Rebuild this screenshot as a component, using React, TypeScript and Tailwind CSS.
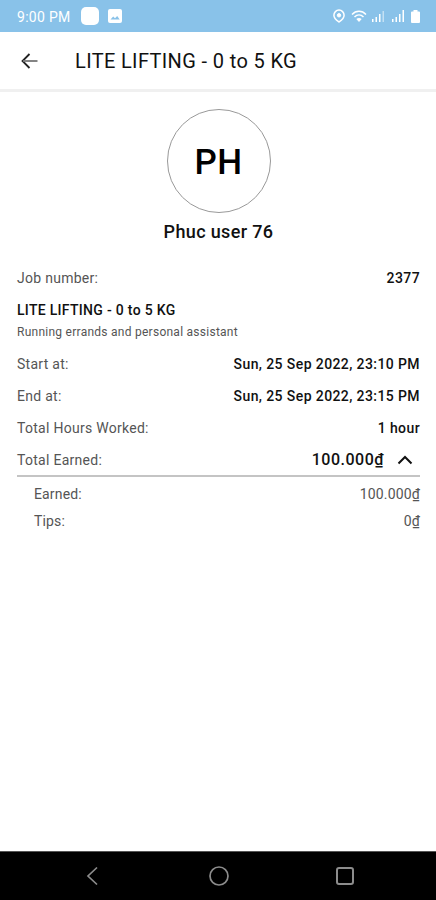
import React from 'react';

interface DetailRowProps {
  label: string;
  value: string;
}

const DetailRow: React.FC<DetailRowProps> = ({ label, value }) => (
  <div className="flex h-8 items-center justify-between">
    <span className="text-sm tracking-[0.28px] text-[#555]">{label}</span>
    <span className="text-sm font-medium tracking-[0.4px] text-[#111]">{value}</span>
  </div>
);

const StatusBar = () => (
  <div className="flex h-8 items-center bg-[#89c2e9] pl-[17px] pr-[16px] text-white">
    <span className="w-[54px] whitespace-nowrap pt-px text-sm tracking-[0.3px]">9:00 PM</span>
    <div className="ml-[10px] h-[18px] w-[18px] rounded-[5px] bg-white"></div>
    <svg className="ml-[9px]" width="14" height="14" viewBox="0 0 14 14">
      <rect width="14" height="14" rx="2" fill="white" />
      <path d="M2.5 10.5l2.7-3 1.8 1.8 2.2-2.2 2.5 3.4z" fill="#89c2e9" />
    </svg>
    <div className="ml-auto flex items-center">
      <svg width="12" height="14" viewBox="0 0 12 14" fill="none" stroke="white">
        <path d="M6 13C4 11.600.9 9.500.9 6.200a5.100 5.100 0 0 1 10.200 0C11.100 9.500 8 11.600 6 13z" strokeWidth="1.500" />
        <circle cx="6" cy="6.300" r="1.700" fill="white" />
      </svg>
      <svg className="ml-[6px]" width="16" height="13" viewBox="0 0 16 13" fill="none" stroke="white" strokeWidth="1.500">
        <path d="M1 4.500C5 .3 11 .3 15 4.500M3.500 7c2.700-2.600 6.300-2.600 9 0" />
        <path d="M8 12L5.300 9c1.600-1.500 3.800-1.500 5.400 0z" fill="white" stroke="none" />
      </svg>
      <svg className="ml-[4px]" width="14" height="12" viewBox="0 0 14 12" fill="white">
        <path d="M1 9h1.500v3H1zM4.500 7H6v5H4.500zM8 4h1.500v8H8z" />
        <path d="M11.500 1H13v11h-1.500z" opacity=".5" />
      </svg>
      <svg className="ml-[6px]" width="14" height="12" viewBox="0 0 14 12" fill="white">
        <path d="M1 9h1.500v3H1zM4.500 7H6v5H4.500zM8 4h1.500v8H8zM11.500 0H13v12h-1.500z" />
      </svg>
      <svg className="ml-[6px]" width="9" height="13" viewBox="0 0 9 13" fill="white">
        <path d="M2.500 0h4v1.500H8a1 1 0 0 1 1 1V12a1 1 0 0 1-1 1H1a1 1 0 0 1-1-1V2.500a1 1 0 0 1 1-1h1.500z" />
      </svg>
    </div>
  </div>
);

const NavigationBar = () => (
  <div className="flex h-[49px] items-center border-t border-[#555] bg-black pl-[85px]">
    <svg width="16" height="20" viewBox="0 0 16 20" fill="none" stroke="#8c8c8c" strokeWidth="1.700">
      <path d="M12 1.500L3 10l9 8.500" />
    </svg>
    <svg className="ml-[107px]" width="22" height="22" viewBox="0 0 22 22" fill="none" stroke="#8c8c8c" strokeWidth="1.700">
      <circle cx="11" cy="11" r="9" />
    </svg>
    <svg className="ml-[105px]" width="20" height="20" viewBox="0 0 20 20" fill="none" stroke="#8c8c8c" strokeWidth="2">
      <rect x="2" y="2" width="16" height="16" rx="2" />
    </svg>
  </div>
);

const App: React.FC = () => {
  const schedule = [
    { label: 'Start at:', value: 'Sun, 25 Sep 2022, 23:10 PM' },
    { label: 'End at:', value: 'Sun, 25 Sep 2022, 23:15 PM' },
    { label: 'Total Hours Worked:', value: '1 hour' },
  ];

  const breakdown = [
    { label: 'Earned:', value: '100.000₫' },
    { label: 'Tips:', value: '0₫' },
  ];

  return (
    <div className="flex h-screen flex-col bg-white font-['Roboto','Noto_Sans',sans-serif]">
      <StatusBar />

      <header className="flex h-[60px] items-center border-b-[3px] border-[#f0f0f0] pl-[21px]">
        <svg width="17" height="16" viewBox="0 0 17 16" fill="none" stroke="#222" strokeWidth="1.800">
          <path d="M8.500 1L1.500 8l7 7" />
          <path d="M2 8h14.500" stroke="#777" />
        </svg>
        <h1 className="ml-[37px] pt-px text-xl tracking-[0.36px] text-[#111]">LITE LIFTING - 0 to 5 KG</h1>
      </header>

      <main className="flex-1 pl-[17px] pr-4 pt-[17px]">
        <div className="flex flex-col items-center">
          <div className="flex h-[104px] w-[104px] items-center justify-center rounded-full border border-[#999]">
            <span className="pt-[4px] text-[35px] font-medium tracking-[0.4px] text-black">PH</span>
          </div>
          <h2 className="mt-[5px] text-lg font-medium tracking-[0.35px] text-[#111]">Phuc user 76</h2>
        </div>

        <div className="mt-[16px]">
          <DetailRow label="Job number:" value="2377" />
          <div className="h-[54px] pt-[6px]">
            <h3 className="text-sm font-medium tracking-[0.3px] text-[#111]">LITE LIFTING - 0 to 5 KG</h3>
            <p className="mt-1 text-xs leading-4 tracking-[0.26px] text-[#555]">Running errands and personal assistant</p>
          </div>
          {schedule.map((row) => (
            <DetailRow key={row.label} label={row.label} value={row.value} />
          ))}
          <div className="flex h-[33px] items-center justify-between border-b-2 border-[#c4c4c4]">
            <span className="text-sm tracking-[0.28px] text-[#555]">Total Earned:</span>
            <div className="flex items-center pr-[7px]">
              <span className="text-base font-medium tracking-[0.5px] text-[#111]">100.000₫</span>
              <svg className="ml-[13px]" width="16" height="10" viewBox="0 0 16 10" fill="none" stroke="#111" strokeWidth="2">
                <path d="M1.500 8.500L8 2l6.500 6.500" />
              </svg>
            </div>
          </div>
          <div className="pl-[17px] pt-[3px]">
            {breakdown.map((row) => (
              <div key={row.label} className="flex h-[27px] items-center justify-between text-sm tracking-[0.15px] text-[#555]">
                <span>{row.label}</span>
                <span>{row.value}</span>
              </div>
            ))}
          </div>
        </div>
      </main>

      <NavigationBar />
    </div>
  );
};

export default App;
